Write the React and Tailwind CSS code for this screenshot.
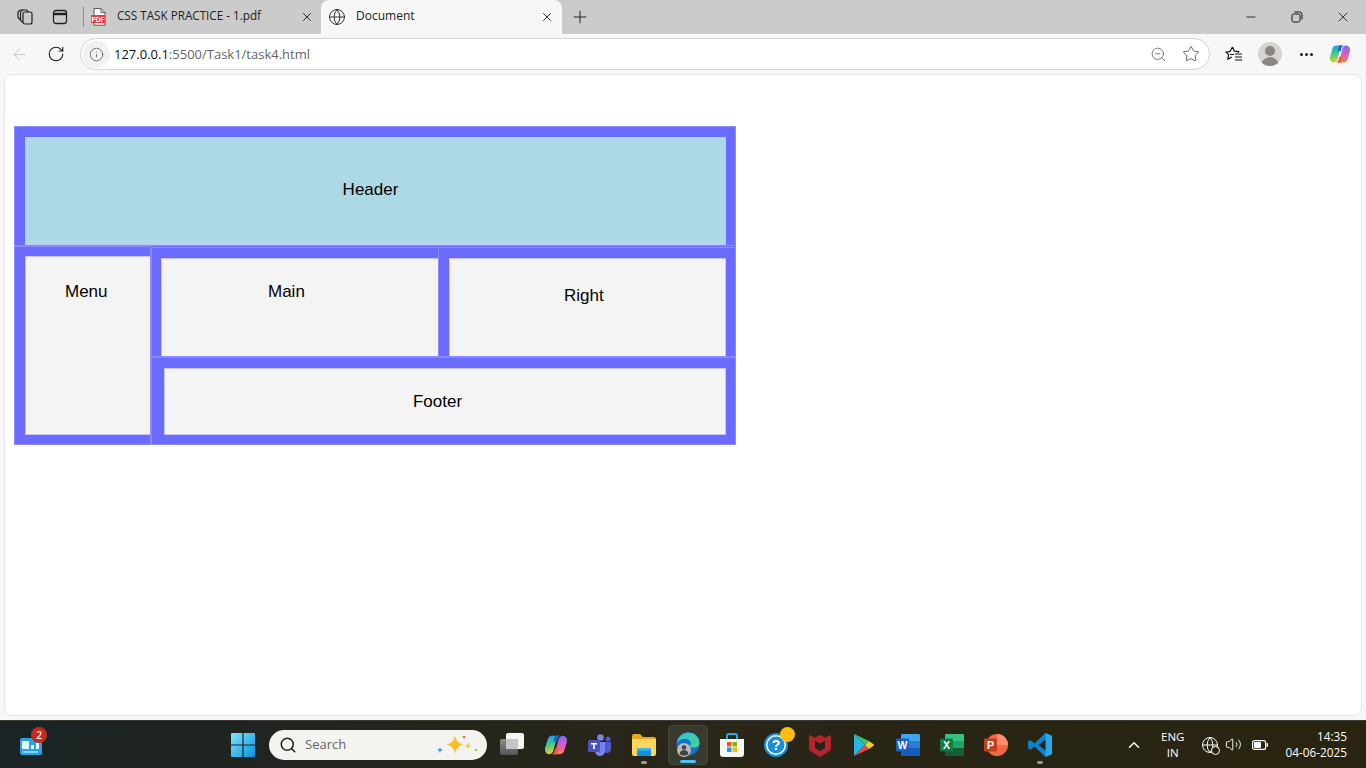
import React from 'react';
import { ArrowLeft, RotateCw, Info, ZoomOut, Star, Plus, X, Minus, Globe, ChevronUp, Search, Volume2 } from 'lucide-react';

const Cell = ({ className = '', inner = 'bg-[#f4f4f4]', children }) => (
  <div className={`border-[#6b6bff] outline outline-1 -outline-offset-1 outline-[#8a8aff] shadow-[inset_0_0_0_1px_#c5c5f5] ${inner} ${className}`}>
    {children}
  </div>
);

const TabGroupsIcon = () => (
  <svg width="18" height="18" viewBox="0 0 18 18" fill="none" stroke="#222" strokeWidth="1.2">
    <rect x="7" y="4" width="9" height="12" rx="2" />
    <path d="M7 14.500 4.500 12.500V4.500l2-2.500h4l2 2" />
    <path d="M4.500 12 2 9.500V4l2-2h3" />
  </svg>
);

const VerticalTabsIcon = () => (
  <svg width="16" height="16" viewBox="0 0 16 16" fill="none" stroke="#222" strokeWidth="1.3">
    <rect x="1.500" y="1.500" width="13" height="13" rx="2.500" />
    <path d="M1.500 5h13" strokeWidth="2.400" />
  </svg>
);

const PdfIcon = () => (
  <svg width="16" height="18" viewBox="0 0 16 18">
    <path d="M3 .6h7l4 4v12.600H3z" fill="#fff" stroke="#555" strokeWidth="1" />
    <path d="M10 .6v4h4" fill="none" stroke="#555" strokeWidth="1" />
    <rect x="0" y="7" width="14" height="8" fill="#ee3d3d" />
    <text x="7" y="13.500" textAnchor="middle" fontSize="6.500" fontWeight="700" fill="#fff" fontFamily="Liberation Sans, sans-serif">PDF</text>
  </svg>
);

const FavoritesIcon = () => (
  <svg width="18" height="18" viewBox="0 0 18 18" fill="none" stroke="#111" strokeWidth="1.2">
    <path d="M7.500 2 9.400 6.200l4.400.4-1 .9M9 9.500H5M3.700 9.600.9 7l4-.4L7.500 2M3.700 9.600l-.9 4.600 4-2.300" strokeLinejoin="round" />
    <path d="M10 9h7M10 12h7M10 15h7" />
  </svg>
);

const CopilotIcon = ({ size = 22, id = 'cp' }) => (
  <svg width={size} height={size} viewBox="0 0 22 22">
    <defs>
      <linearGradient id={`${id}A`} x1="0.300" y1="0" x2="0.500" y2="1">
        <stop offset="0" stopColor="#1f9ee8" />
        <stop offset="0.45" stopColor="#3fc98a" />
        <stop offset="1" stopColor="#f6c936" />
      </linearGradient>
      <linearGradient id={`${id}B`} x1="0.500" y1="0" x2="0.500" y2="1">
        <stop offset="0" stopColor="#7a6cf0" />
        <stop offset="0.55" stopColor="#e45bc0" />
        <stop offset="1" stopColor="#f5834a" />
      </linearGradient>
    </defs>
    <path d="M7.500 2.500h6.500c-1.500.5-2.300 1.800-2.800 3.500L9 15c-.6 2.500-1.800 4.500-4 4.500-2.800 0-4.500-2.500-4-5.500L3.500 5.500C4 3.700 5.500 2.500 7.500 2.500z" fill={`url(#${id}A)`} />
    <path d="M14.500 19.500H8c1.500-.5 2.300-1.800 2.800-3.500L13 7c.6-2.500 1.800-4.500 4-4.500 2.800 0 4.500 2.500 4 5.500l-2.500 8.500c-.5 1.800-2 3-4 3z" fill={`url(#${id}B)`} />
    <path d="M11.500 2.500h3.500c-1.500.5-2.300 1.800-2.800 3.500l-.7 2.500-3-1 1-3c.3-1.300 1-2 2-2.500z" fill="#1668c9" />
    <path d="M10.500 19.500H7c1.500-.5 2.300-1.800 2.800-3.500l.7-2.500 3 1-1 3c-.3 1.300-1 2-2 2.500z" fill="#f0563a" />
  </svg>
);

const WidgetsIcon = () => (
  <div className="relative w-[22px] h-[20px]">
    <svg width="22" height="20" viewBox="0 0 22 20">
      <rect x="0" y="3" width="22" height="17" rx="2" fill="#2aa3e0" />
      <rect x="2" y="6" width="7" height="8" rx="1" fill="#e8f6ff" />
      <rect x="11" y="10" width="3" height="4" fill="#e8f6ff" />
      <rect x="16" y="8" width="3" height="6" fill="#e8f6ff" />
      <rect x="3" y="16" width="15" height="2" fill="#7fd6f7" />
    </svg>
  </div>
);

const WindowsLogo = () => (
  <svg width="24" height="24" viewBox="0 0 24 24">
    <defs>
      <linearGradient id="winG" x1="0" y1="0" x2="1" y2="1">
        <stop offset="0" stopColor="#7ee8fb" />
        <stop offset="1" stopColor="#0a8fe0" />
      </linearGradient>
    </defs>
    <path d="M0 1a1 1 0 0 1 1-1h10.400v11.400H0zM12.600 0H23a1 1 0 0 1 1 1v10.400H12.600zM0 12.600h11.400V24H1a1 1 0 0 1-1-1zM12.600 12.600H24V23a1 1 0 0 1-1 1H12.600z" fill="url(#winG)" />
  </svg>
);

const Sparkles = () => (
  <svg width="48" height="24" viewBox="0 0 48 24">
    <path d="M20 2c1 6 3.500 8 8.500 9.500-5 1.500-7.500 3.500-8.500 9.500-1-6-3.500-8-8.500-9.500C16.500 10 19 8 20 2z" fill="#fbbf24" />
    <path d="M33 9c.5 2.500 1.200 3.200 3.500 4-2.300.5-3 1.200-3.500 3.500-.5-2.300-1.200-3-3.500-3.500 2.300-.8 3-1.500 3.500-4z" fill="#fbc94a" />
    <path d="M5 14c.4 2 1 2.500 3 3-2 .6-2.600 1-3 3-.4-2-1-2.400-3-3 2-.5 2.600-1 3-3z" fill="#2b9be8" />
    <circle cx="29" cy="4" r="1.300" fill="#f2643a" />
    <circle cx="41" cy="17" r="1.200" fill="#8cc63f" />
  </svg>
);

const TaskViewIcon = () => (
  <svg width="24" height="24" viewBox="0 0 24 24">
    <defs>
      <linearGradient id="tvA" x1="0" y1="0" x2="0" y2="1">
        <stop offset="0" stopColor="#8a8a8a" />
        <stop offset="1" stopColor="#555" />
      </linearGradient>
    </defs>
    <rect x="0" y="6" width="18" height="16" rx="2" fill="url(#tvA)" />
    <rect x="6" y="0" width="18" height="16" rx="2" fill="#f4f4f4" />
    <rect x="6" y="6" width="12" height="10" fill="#c4c4c4" />
  </svg>
);

const TeamsIcon = () => (
  <svg width="24" height="22" viewBox="0 0 24 22">
    <circle cx="12.500" cy="3.500" r="3.300" fill="#7b83eb" />
    <circle cx="20" cy="5" r="2.500" fill="#5059c9" />
    <path d="M15 8h8v7c0 2.500-1.800 4-4 4-1 0-2-.3-2.800-1z" fill="#5059c9" />
    <path d="M7 8h10v9c0 2.800-2.200 5-5 5-2.600 0-4.500-1.700-5-4z" fill="#7b83eb" />
    <rect x="0" y="6" width="12" height="12" rx="1.500" fill="#4b53bc" />
    <path d="M3 9h6v1.500H6.800V15H5.200v-4.500H3z" fill="#fff" />
  </svg>
);

const FolderIcon = () => (
  <svg width="24" height="22" viewBox="0 0 24 22">
    <path d="M0 2a2 2 0 0 1 2-2h6l3 3h11a2 2 0 0 1 2 2v2H0z" fill="#e6a91e" />
    <path d="M0 5h24v15a2 2 0 0 1-2 2H2a2 2 0 0 1-2-2z" fill="#fdd75c" />
    <rect x="5" y="14" width="14" height="8" rx="1" fill="#1a8fdc" />
    <rect x="5" y="14" width="14" height="2.500" fill="#38b6f2" />
  </svg>
);

const EdgeIcon = () => (
  <svg width="26" height="26" viewBox="0 0 26 26">
    <defs>
      <linearGradient id="edgeA" x1="0" y1="0" x2="1" y2="1">
        <stop offset="0" stopColor="#2fc4e0" />
        <stop offset="1" stopColor="#4bd28a" />
      </linearGradient>
    </defs>
    <circle cx="13" cy="12" r="11.500" fill="#1173c6" />
    <path d="M2 11C3 5 7.500 .5 13.500 .5 20 .5 24.500 5.500 24.500 11c0 3-2.500 4.500-5.500 4.500-2 0-4-.6-4.500-1.500 2-1 2-3.500 0-5.500C11 5.500 5 6.500 2 11z" fill="url(#edgeA)" />
    <circle cx="9" cy="18" r="7" fill="#b9b9b9" />
    <circle cx="9" cy="15.500" r="2.300" fill="#444" />
    <path d="M4.500 22c.5-3 2.300-4 4.500-4s4 1 4.500 4c-1 1-2.800 1.600-4.500 1.600S5.500 23 4.500 22z" fill="#444" />
  </svg>
);

const StoreIcon = () => (
  <svg width="24" height="24" viewBox="0 0 24 24">
    <path d="M7 6V3a2 2 0 0 1 2-2h6a2 2 0 0 1 2 2v3" fill="none" stroke="#28a8ea" strokeWidth="2" />
    <path d="M0 6h24v15a3 3 0 0 1-3 3H3a3 3 0 0 1-3-3z" fill="#f5f5f5" />
    <rect x="7" y="9" width="4.500" height="4.500" fill="#f25022" />
    <rect x="12.500" y="9" width="4.500" height="4.500" fill="#7fba00" />
    <rect x="7" y="14.500" width="4.500" height="4.500" fill="#00a4ef" />
    <rect x="12.500" y="14.500" width="4.500" height="4.500" fill="#ffb900" />
  </svg>
);

const HelpIcon = () => (
  <div className="relative w-[24px] h-[24px]">
    <svg width="24" height="24" viewBox="0 0 24 24">
      <circle cx="12" cy="12" r="11" fill="#fff" stroke="#1a8fd8" strokeWidth="2" />
      <circle cx="12" cy="12" r="8.500" fill="#1a8fd8" />
      <text x="12" y="17" textAnchor="middle" fontSize="14" fontWeight="700" fill="#fff" fontFamily="Liberation Sans, sans-serif">?</text>
    </svg>
    <span className="absolute -top-[6px] -right-[7px] w-[15px] h-[15px] rounded-full bg-[#fdbd0c]" />
  </div>
);

const McAfeeIcon = () => (
  <svg width="22" height="24" viewBox="0 0 22 24">
    <path d="M0 2 6 4.500 11 2l5 2.500L22 2v15l-11 7-11-7z" fill="#b3262a" />
    <path d="M6 8v7l5 3 5-3V8l-5 2.500z" fill="#23231a" />
  </svg>
);

const PlayIcon = () => (
  <svg width="22" height="24" viewBox="0 0 22 24">
    <path d="M1 1v22l11-11z" fill="#25b4e8" />
    <path d="M1 1l11 11 4-4z" fill="#38c56f" />
    <path d="M1 23l11-11 4 4z" fill="#ea4a4a" />
    <path d="M16 8l5.500 4-5.500 4-4-4z" fill="#fcc934" />
  </svg>
);

const OfficeTile = ({ letter, top, mid, low, front }) => (
  <svg width="24" height="24" viewBox="0 0 24 24">
    <rect x="5" y="1" width="19" height="22" rx="1.500" fill={mid} />
    <path d="M6.500 1H22.500A1.500 1.500 0 0 1 24 2.500V8H5V2.500A1.500 1.500 0 0 1 6.500 1z" fill={top} />
    <path d="M5 15H24V21.500A1.500 1.500 0 0 1 22.500 23H6.500A1.500 1.500 0 0 1 5 21.500z" fill={low} />
    <rect x="0" y="5.500" width="13" height="13" rx="1" fill={front} />
    <text x="6.500" y="15.800" textAnchor="middle" fontSize="10.500" fontWeight="700" fill="#fff" fontFamily="Liberation Sans, sans-serif">{letter}</text>
  </svg>
);

const PowerPointIcon = () => (
  <svg width="24" height="24" viewBox="0 0 24 24">
    <circle cx="13" cy="12" r="11" fill="#ed6c47" />
    <path d="M13 1a11 11 0 0 1 11 11H13z" fill="#ff8f6b" />
    <rect x="0" y="5.500" width="13" height="13" rx="1" fill="#c43e1c" />
    <text x="6.500" y="15.800" textAnchor="middle" fontSize="10.500" fontWeight="700" fill="#fff" fontFamily="Liberation Sans, sans-serif">P</text>
  </svg>
);

const VSCodeIcon = () => (
  <svg width="24" height="24" viewBox="0 0 24 24">
    <path d="M17.500 0 24 3v18l-6.500 3L6.500 13.500l-4 3.200L0 15.500v-7l2.500-1.200 4 3.200z" fill="#0a84d0" />
    <path d="M17.500 0 24 3v18l-6.500 3z" fill="#2aa6ee" />
    <path d="M17.500 6.500 10.500 12l7 5.500z" fill="#23231a" />
  </svg>
);

const TaskbarSlot = ({ children, dot, active }) => (
  <div className={`relative w-[40px] h-[40px] flex items-center justify-center rounded ${active ? 'bg-[#393a2e] border border-[#45463a]' : ''}`}>
    {children}
    {dot && <span className={`absolute bottom-[1px] h-[3px] rounded-full ${active ? 'w-[16px] bg-[#4cc2ff]' : 'w-[6px] bg-[#9b9b93]'}`} />}
  </div>
);

export default function App() {
  return (
    <div className="w-[1366px] h-[768px] overflow-hidden flex flex-col bg-[#f7f7f7] font-['Open_Sans',sans-serif]">
      {/* tab strip */}
      <div className="h-[34px] bg-[#cbcbcb] flex items-center shrink-0">
        <div className="w-[48px] flex justify-center pl-[2px]"><TabGroupsIcon /></div>
        <div className="w-[24px] flex justify-center"><VerticalTabsIcon /></div>
        <div className="w-px h-[20px] bg-[#8c8c8c] ml-[11px]" />
        <div className="w-[238px] h-full flex items-center pl-[7px] pr-[8px]">
          <PdfIcon />
          <span className="ml-[10px] mb-[2px] text-[11.700px] text-[#222] flex-1">CSS TASK PRACTICE - 1.pdf</span>
          <X size={14} strokeWidth={1.6} className="text-[#222]" />
        </div>
        <div className="w-[241px] h-full bg-[#f7f7f7] rounded-t-lg flex items-center pl-[7px] pr-[8px] -ml-[1px]">
          <Globe size={18} strokeWidth={1.2} className="text-[#222]" />
          <span className="ml-[10px] mb-[2px] text-[12px] text-[#222] flex-1">Document</span>
          <X size={14} strokeWidth={1.6} className="text-[#222]" />
        </div>
        <div className="w-[36px] flex justify-center"><Plus size={20} strokeWidth={1.2} className="text-[#222]" /></div>
        <div className="flex-1" />
        <div className="flex items-center text-[#111]">
          <div className="w-[46px] flex justify-center"><Minus size={14} strokeWidth={1.4} /></div>
          <div className="w-[46px] flex justify-center">
            <svg width="12" height="12" viewBox="0 0 12 12" fill="none" stroke="#111" strokeWidth="1">
              <rect x="1" y="3" width="8" height="8" rx="1.500" />
              <path d="M3.500 1h5A2.500 2.500 0 0 1 11 3.500v5" />
            </svg>
          </div>
          <div className="w-[46px] flex justify-center"><X size={16} strokeWidth={1.2} /></div>
        </div>
      </div>

      {/* toolbar */}
      <div className="h-[40px] flex items-center shrink-0">
        <div className="w-[38px] flex justify-center pl-[1px]"><ArrowLeft size={19} strokeWidth={1.2} className="text-[#c4c4c4]" /></div>
        <div className="w-[36px] flex justify-center"><RotateCw size={18} strokeWidth={1.5} className="text-[#222]" /></div>
        <div className="w-[1130px] h-[32px] ml-[6px] rounded-full bg-white border border-[#d4d4d4] flex items-center">
          <div className="w-[27px] h-[27px] ml-[2px] rounded-full bg-[#f1f1f1] flex items-center justify-center">
            <Info size={15} strokeWidth={1.4} className="text-[#666]" />
          </div>
          <span className="ml-[4px] mt-px text-[13px] flex-1 text-[#666]"><span className="text-[#111]">127.0.0.1</span>:5500/Task1/task4.html</span>
          <ZoomOut size={17} strokeWidth={1.2} className="text-[#666] mr-[15px]" />
          <Star size={18} strokeWidth={1.2} className="text-[#555] mr-[9px]" />
        </div>
        <div className="w-[48px] flex justify-center"><FavoritesIcon /></div>
        <div className="w-[24px] h-[24px] rounded-full bg-[#d6d4d0] overflow-hidden flex flex-col items-center">
          <span className="mt-[4px] w-[10px] h-[10px] rounded-full bg-[#8a8783]" />
          <span className="mt-[1px] w-[18px] h-[10px] rounded-t-full bg-[#8a8783]" />
        </div>
        <div className="w-[47px] flex justify-center gap-[2px] pl-[1px]">
          <span className="w-[3px] h-[3px] rounded-full bg-[#222]" />
          <span className="w-[3px] h-[3px] rounded-full bg-[#222]" />
          <span className="w-[3px] h-[3px] rounded-full bg-[#222]" />
        </div>
        <CopilotIcon id="cpTop" />
      </div>

      {/* page */}
      <div className="h-[642px] mx-[4px] bg-white rounded-lg border border-[#e6e6e6] shrink-0 pl-[9px] pt-[51px] font-['Liberation_Sans',sans-serif] text-[17px] text-black">
        <div className="w-[722px] bg-[#6b6bff]">
          <Cell className="h-[120px] border-t-[11px] border-l-[11px] border-r-[10px] border-b-[1px] flex items-center justify-center pr-[10px] pb-[2px]" inner="bg-[#add8e6]">Header</Cell>
          <div className="flex h-[199px]">
            <Cell className="w-[137px] shrink-0 border-t-[10px] border-b-[10px] border-l-[11px] pt-[23px] pl-[40px]">Menu</Cell>
            <div className="flex-1 min-w-0 flex flex-col pt-px">
              <div className="flex h-[110px]">
                <Cell className="w-[288px] shrink-0 border-t-[11px] border-l-[10px] pt-[21px] pl-[107px]">Main</Cell>
                <Cell className="w-[298px] shrink-0 -ml-px border-t-[11px] border-l-[11px] border-r-[10px] pt-[25px] pl-[115px]">Right</Cell>
              </div>
              <Cell className="h-[88px] border-t-[11px] border-b-[10px] border-l-[13px] border-r-[10px] flex items-center justify-center pr-[15px]">Footer</Cell>
            </div>
          </div>
        </div>
      </div>

      {/* taskbar */}
      <div className="mt-auto h-[48px] shrink-0 flex items-center bg-gradient-to-r from-[#1b2325] via-[#2a2618] to-[#28240f] border-t border-[#3a3a34] text-white relative">
        <div className="w-[231px] pl-[20px] flex items-center">
          <div className="relative">
            <WidgetsIcon />
            <span className="absolute -top-[8px] left-[11px] w-[16px] h-[16px] rounded-full bg-[#c42b1c] text-[10px] leading-[16px] text-center font-semibold">2</span>
          </div>
        </div>
        <WindowsLogo />
        <div className="ml-[14px] w-[218px] h-[30px] rounded-full bg-[#f3f3ef] flex items-center pl-[10px] pr-[4px] text-[#666]">
          <Search size={18} strokeWidth={2} className="text-[#222]" />
          <span className="ml-[8px] text-[13px] flex-1">Search</span>
          <Sparkles />
        </div>
        <div className="ml-[5px] flex items-center">
          <TaskbarSlot><TaskViewIcon /></TaskbarSlot>
          <div className="w-[4px]" />
          <TaskbarSlot><CopilotIcon size={24} id="cpBar" /></TaskbarSlot>
          <div className="w-[4px]" />
          <TaskbarSlot><TeamsIcon /></TaskbarSlot>
          <div className="w-[4px]" />
          <TaskbarSlot dot><FolderIcon /></TaskbarSlot>
          <div className="w-[4px]" />
          <TaskbarSlot dot active><EdgeIcon /></TaskbarSlot>
          <div className="w-[4px]" />
          <TaskbarSlot><StoreIcon /></TaskbarSlot>
          <div className="w-[4px]" />
          <TaskbarSlot><HelpIcon /></TaskbarSlot>
          <div className="w-[4px]" />
          <TaskbarSlot><McAfeeIcon /></TaskbarSlot>
          <div className="w-[4px]" />
          <TaskbarSlot><PlayIcon /></TaskbarSlot>
          <div className="w-[4px]" />
          <TaskbarSlot><OfficeTile letter="W" top="#41a5ee" mid="#2b7cd3" low="#185abd" front="#1a5fc4" /></TaskbarSlot>
          <div className="w-[4px]" />
          <TaskbarSlot><OfficeTile letter="X" top="#33c481" mid="#21a366" low="#185c37" front="#107c41" /></TaskbarSlot>
          <div className="w-[4px]" />
          <TaskbarSlot><PowerPointIcon /></TaskbarSlot>
          <div className="w-[4px]" />
          <TaskbarSlot dot><VSCodeIcon /></TaskbarSlot>
        </div>
        <div className="flex-1" />
        <ChevronUp size={18} strokeWidth={2} className="mr-[18px]" />
        <div className="text-[11.500px] leading-[16px] text-center mr-[17px]">
          <div>ENG</div>
          <div>IN</div>
        </div>
        <div className="relative mr-[6px]">
          <Globe size={18} strokeWidth={1.3} />
          <span className="absolute -right-[1px] -bottom-[1px] w-[9px] h-[9px] rounded-full border border-white bg-[#28240f]" />
        </div>
        <Volume2 size={17} strokeWidth={1.3} className="mr-[10px]" />
        <svg width="16" height="10" viewBox="0 0 16 10" className="mr-[17px]" fill="none">
          <rect x=".6" y=".6" width="13" height="8.800" rx="2" stroke="#fff" strokeWidth="1.200" />
          <rect x="2" y="2" width="7" height="6" rx="1" fill="#fff" />
          <rect x="14.500" y="3" width="1.500" height="4" rx=".7" fill="#fff" />
        </svg>
        <div className="text-[11.800px] leading-[16px] text-right pr-[19px] mb-[2px]">
          <div>14:35</div>
          <div>04-06-2025</div>
        </div>
      </div>
    </div>
  );
}
